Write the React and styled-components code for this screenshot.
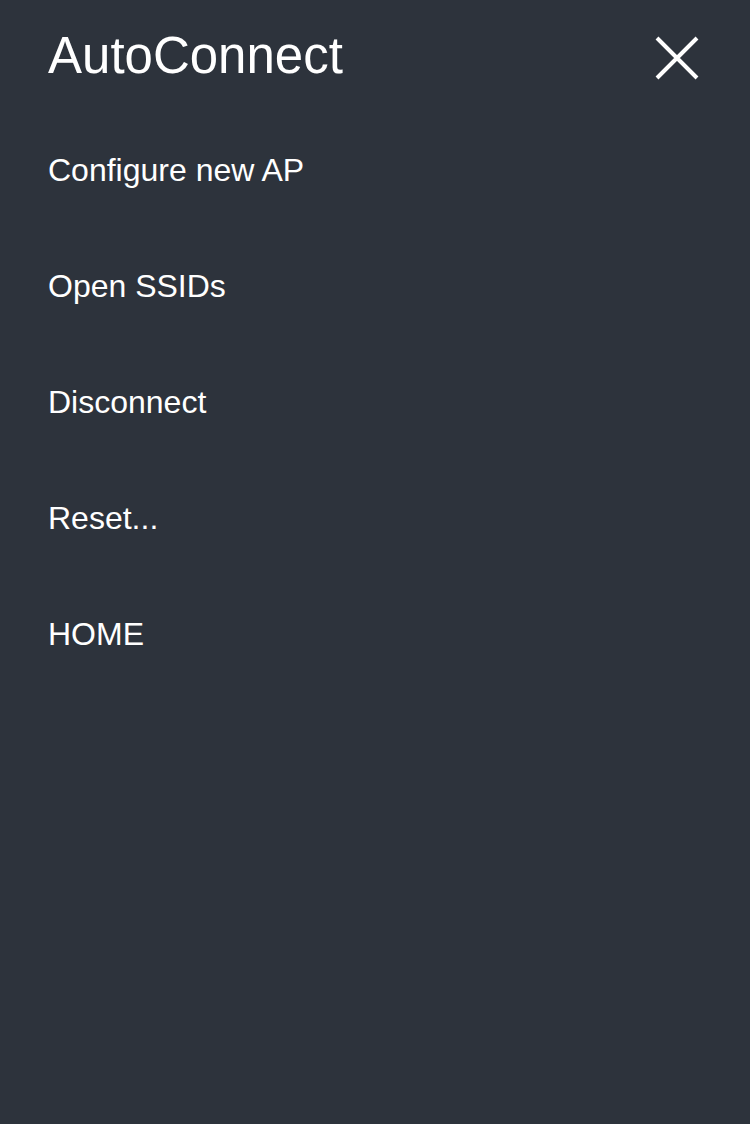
import styled, { createGlobalStyle } from "styled-components";

const GlobalStyle = createGlobalStyle`
  html, body {
    margin: 0;
    padding: 0;
    background: #2d333c;
  }
  body {
    font-family: "Liberation Sans", Arial, sans-serif;
  }
`;

const items = ["Configure new AP", "Open SSIDs", "Disconnect", "Reset...", "HOME"];

const App = () => {
  return (
    <>
      <GlobalStyle />
      <Drawer>
        <Header>
          <Title>AutoConnect</Title>
          <CloseButton aria-label="close">
            <svg width="44" height="44" viewBox="0 0 44 44">
              <path
                d="M2 2 L42 42 M42 2 L2 42"
                stroke="#ffffff"
                strokeWidth="4"
                fill="none"
              />
            </svg>
          </CloseButton>
        </Header>
        <Menu>
          {items.map((label) => (
            <MenuItem key={label} href="#">
              {label}
            </MenuItem>
          ))}
        </Menu>
      </Drawer>
    </>
  );
};

export default App;

const Drawer = styled.div`
  width: 750px;
  height: 1124px;
  background: #2d333c;
  color: #ffffff;
  padding: 0 51px 0 48px;
  box-sizing: border-box;
`;

const Header = styled.div`
  height: 112px;
  display: flex;
  align-items: center;
  justify-content: space-between;
`;

const Title = styled.h1`
  margin: 0 0 1px 0;
  font-size: 51px;
  font-weight: normal;
  line-height: 1;
`;

const CloseButton = styled.button`
  background: none;
  border: none;
  padding: 0;
  margin-top: 4px;
  width: 44px;
  height: 44px;
  display: flex;
  cursor: pointer;
`;

const Menu = styled.nav`
  display: flex;
  flex-direction: column;
`;

const MenuItem = styled.a`
  height: 116px;
  display: flex;
  align-items: center;
  font-size: 32px;
  color: #ffffff;
  text-decoration: none;
`;
